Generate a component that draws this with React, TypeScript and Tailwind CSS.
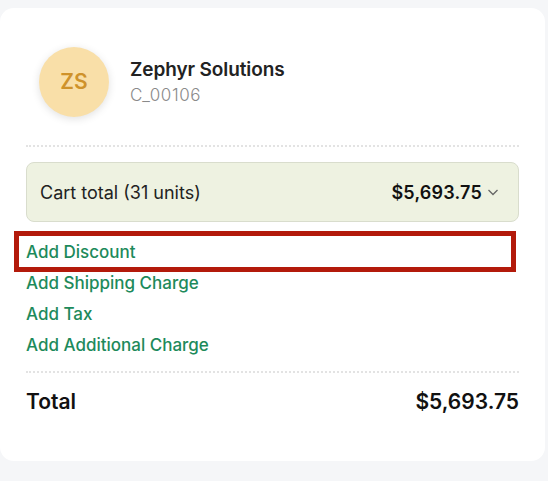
import React from "react";

export default function App() {
  const links = ["Add Discount", "Add Shipping Charge", "Add Tax", "Add Additional Charge"];
  return (
    <div className="w-[548px] h-[481px] bg-[#f5f6f8] pt-[8px] pr-[3px]" style={{ fontFamily: "Inter, 'Open Sans', sans-serif" }}>
      <div className="bg-white rounded-[14px] h-[453px] px-[26px] pt-[39px]">
        <div className="flex items-center pl-[13px] gap-[21px]">
          <div className="w-[70px] h-[70px] rounded-full bg-[#f9dfa8] flex items-center justify-center shadow-[0_2px_8px_rgba(0,0,0,0.12)]">
            <span className="text-[21px] font-semibold text-[#cf922a]">ZS</span>
          </div>
          <div className="flex flex-col">
            <span className="text-[19px] font-semibold text-[#222] leading-[24px] tracking-[-0.1px]">Zephyr Solutions</span>
            <span className="text-[17px] text-[#8a8a8a] leading-[22px] mt-[2px] font-light tracking-[0.6px]">C_00106</span>
          </div>
        </div>
        <div className="mt-[28px] border-t-2 border-dotted border-[#e3e3e3]" />
        <div className="mt-[15px] h-[60px] rounded-[8px] bg-[#eef2e1] border border-[#d9ddcd] flex items-center justify-between pl-[13px] pr-[18px]">
          <span className="text-[18px] text-[#222]">Cart total (31 units)</span>
          <div className="flex items-center gap-[4px]">
            <span className="text-[18px] font-semibold text-[#111] tracking-[0.2px]">$5,693.75</span>
            <svg width="14" height="14" viewBox="0 0 14 14" fill="none" stroke="#666" strokeWidth="1.3">
              <path d="M2.5 5l4.5 4.5 4.5-4.5" />
            </svg>
          </div>
        </div>
        <div className="mt-[15px] flex flex-col">
          {links.map((l, i) => (
            <div key={l} className="relative h-[31px] flex items-center">
              {i === 0 && <div className="absolute left-[-12px] right-[3px] top-[-6px] bottom-[-4px] border-[5px] border-[#b31a0b]" />}
              <span className="relative text-[17px] font-medium text-[#1d8a5b]">{l}</span>
            </div>
          ))}
        </div>
        <div className="mt-[10px] border-t-2 border-dotted border-[#e3e3e3]" />
        <div className="mt-[13px] flex items-center justify-between">
          <span className="text-[21px] font-semibold text-[#111]">Total</span>
          <span className="text-[21px] font-semibold text-[#111]">$5,693.75</span>
        </div>
      </div>
    </div>
  );
}
